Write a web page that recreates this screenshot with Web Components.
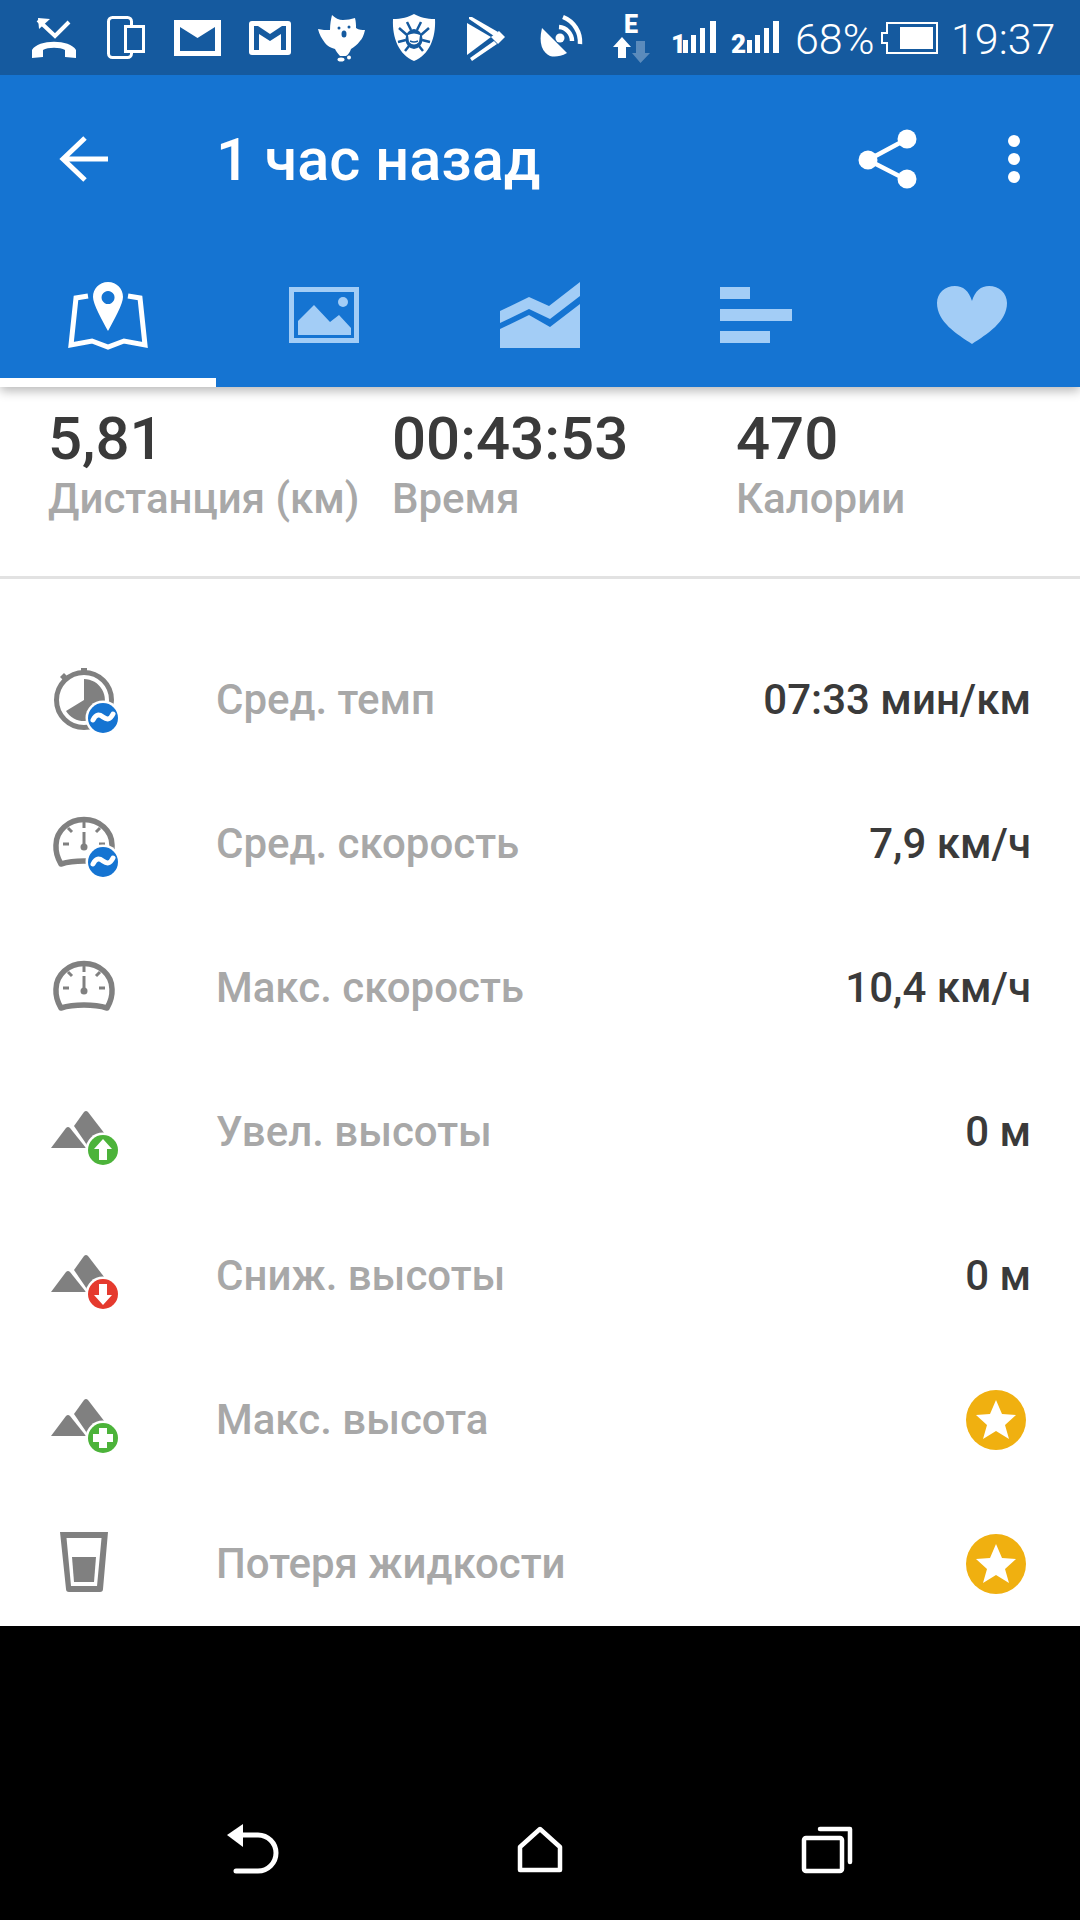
<!DOCTYPE html>
<html lang="ru">
<head>
<meta charset="utf-8">
<title>1 час назад</title>
<style>
  html, body { margin: 0; padding: 0; background: #000; }
  body { width: 1080px; height: 1920px; overflow: hidden; font-family: Roboto, "Noto Sans", sans-serif; }
  app-screen { height: 1920px; }
</style>
</head>
<body>
<app-screen>
  <status-bar slot="status"></status-bar>
  <app-toolbar slot="toolbar" heading="1 час назад"></app-toolbar>
  <stat-strip slot="content"></stat-strip>
  <metric-row slot="content" label="Сред. темп" value="07:33 мин/км" icon="pace"></metric-row>
  <metric-row slot="content" label="Сред. скорость" value="7,9 км/ч" icon="avgspeed"></metric-row>
  <metric-row slot="content" label="Макс. скорость" value="10,4 км/ч" icon="maxspeed"></metric-row>
  <metric-row slot="content" label="Увел. высоты" value="0 м" icon="elevup"></metric-row>
  <metric-row slot="content" label="Сниж. высоты" value="0 м" icon="elevdown"></metric-row>
  <metric-row slot="content" label="Макс. высота" icon="elevmax" premium></metric-row>
  <metric-row slot="content" label="Потеря жидкости" icon="glass" premium></metric-row>
  <nav-bar slot="nav"></nav-bar>
</app-screen>

<script>
const BAR = "#155a9f";
const GREY = "#808080";

// shared bits of the metric icons
const badge = (fill, inner) => `<circle cx="55" cy="54" r="17.5" fill="#fff"/><circle cx="55" cy="54" r="15" fill="${fill}"/>${inner}`;
const wave = `<path d="M45 56c3-6 6-6 10-3s7 3 10-3" fill="none" stroke="#fff" stroke-width="5" stroke-linecap="round"/>`;
const hills = `<path d="M3 52 18 32q2-2 4 0L38 52Z" fill="${GREY}"/><path d="M26 30 36 16q2-2 4 0L60 42 44 52H41Z" fill="${GREY}"/>`;
const gauge = `<path d="M13 56C7 46 8 38 8 37a27.500 25 0 0 1 56 0c0 1 1 9-5 19C46 52 26 52 13 56Z" fill="none" stroke="${GREY}" stroke-width="5.500" stroke-linejoin="round"/>
  <path d="M36 13v7M15 36h6M51 36h6M20 20l4 4M52 20l-4 4" stroke="${GREY}" stroke-width="3"/>
  <path d="M36 24v15" stroke="${GREY}" stroke-width="3"/><circle cx="36" cy="39" r="3.500" fill="${GREY}"/>`;

const ICONS = {
  // status bar, 1 unit = 1 px
  call: [44, 42, `<path d="M6 3 23 19 37 5" fill="none" stroke="#fff" stroke-width="4"/><path d="M6 1 18 2 7 12Z" fill="#fff"/>
    <path d="M0 41V33C6 22 38 22 44 33V41L33 40V33C28 30 16 30 11 33V40Z" fill="#fff"/>`],
  phones: [38, 43, `<rect x="1.500" y="1.500" width="23" height="40" rx="4" fill="none" stroke="#fff" stroke-width="3"/>
    <rect x="18.500" y="10.500" width="18" height="25" fill="${BAR}" stroke="#fff" stroke-width="3"/>`],
  mail: [47, 36, `<path d="M0 0H47V36H0ZM6 7V31H41V7L23.500 18Z" fill="#fff" fill-rule="evenodd"/>`],
  gmail: [42, 34, `<rect width="42" height="34" rx="3" fill="#fff"/><path d="M5 5H9L21 13 33 5H37V29H32V13L21 20 10 13V29H5Z" fill="${BAR}"/>`],
  owl: [47, 48, `<path d="M14 0C17 3 21 5 25 5 29 5 33 4 37 3 38 7 38 10 38 13 41 15 44 15 47 15 46 20 44 24 42 26 39 30 36 32 33 34 32 37 30 40 28 41H22C20 39 18 36 17 34 13 33 9 31 7 28 4 24 1 19 0 14 4 15 8 15 12 15 12 9 13 4 14 0Z" fill="#fff"/>
    <circle cx="21" cy="13" r="1.500" fill="${BAR}"/><circle cx="31" cy="12" r="1.500" fill="${BAR}"/><ellipse cx="26" cy="19" rx="2.500" ry="3.500" fill="${BAR}"/>
    <ellipse cx="23" cy="44.500" rx="3.500" ry="2" fill="#fff"/><circle cx="31" cy="42.500" r="2" fill="#fff"/>`],
  shield: [42, 48, `<path d="M21 0C26 3 34 5 42 5 43 24 36 41 21 47 6 41-1 24 0 5 8 5 16 3 21 0Z" fill="#fff"/>
    <ellipse cx="21" cy="25" rx="8.500" ry="10" fill="${BAR}"/><path d="M15 21Q21 18 27 21L26 28Q21 33 16 28Z" fill="#fff"/><path d="M17 27Q21 29 25 27" stroke="${BAR}" stroke-width="1.500" fill="none"/>
    <path d="M14 8 18 16M28 8 24 16M6 14 14 21M36 14 28 21M5 28 13 26M37 28 29 26M12 37 16 32M30 37 26 32" stroke="${BAR}" stroke-width="2.500"/>`],
  play: [39, 44, `<path d="M0 6 24 20 0 38Z" fill="#fff"/><path d="M2 0 5 0 31 15 27 19 2 2Z" fill="#fff"/><path d="M24 20 32 14 38 20 31 27Z" fill="#fff"/><path d="M3 41 27 24 30 27 5 44Z" fill="#fff"/>`],
  dish: [42, 42, `<path d="M2 12 27 37C20 41 14 41 10 40 3 37-2 28 2 12Z" fill="#fff"/><circle cx="20" cy="22" r="4.500" fill="#fff"/>
    <path d="M19 11A14 14 0 0 1 32 25M23 1A27 27 0 0 1 40 28" fill="none" stroke="#fff" stroke-width="4.500"/>`],
  data: [37, 47, `<text x="18" y="17" font-family="Roboto" font-weight="900" font-size="25" text-anchor="middle" fill="#fff">E</text>
    <path d="M0 31 9 21 18 31H13V42H5V31Z" fill="#fff"/><path d="M23 25H32V37H37L27.500 47 19 37H23Z" fill="#fff" opacity=".3"/>`],
  sig1: [45, 32, `<text x="0" y="32" font-family="Roboto" font-weight="900" font-size="26" fill="#fff">1</text><path d="M12 19h5v13h-5zM20 14h5v18h-5zM29 7h5v25h-5zM39 0h6v32h-6z" fill="#fff"/>`],
  sig2: [47, 32, `<text x="-1" y="32" font-family="Roboto" font-weight="900" font-size="26" fill="#fff">2</text><path d="M15 19h5v13h-5zM23 14h5v18h-5zM32 7h5v25h-5zM41 0h6v32h-6z" fill="#fff"/>`],
  battery: [57, 32, `<path d="M6 1H56V31H6V21H1V11H6Z" fill="none" stroke="#fff" stroke-width="2"/><rect x="19" y="5" width="33" height="22" fill="#fff"/>`],
  // toolbar
  back: [48, 46, `<path d="M48 23H4M25 2 3 23 25 44" fill="none" stroke="#fff" stroke-width="5"/>`],
  share: [58, 60, `<path d="M48 10 9 31 48 51" fill="none" stroke="#fff" stroke-width="4.500"/><circle cx="9" cy="31" r="9.500" fill="#fff"/><circle cx="48" cy="10" r="9.500" fill="#fff"/><circle cx="48" cy="50" r="9.500" fill="#fff"/>`],
  more: [12, 48, `<circle cx="6" cy="6" r="6" fill="#fff"/><circle cx="6" cy="24" r="6" fill="#fff"/><circle cx="6" cy="42" r="6" fill="#fff"/>`],
  // tabs
  map: [80, 66, `<path fill-rule="evenodd" fill="#fff" d="M40 0C49 0 55 7 55 15 55 22 46 38 40 49 34 38 25 22 25 15 25 7 31 0 40 0ZM40 9A6.500 6.500 0 1 0 40.100 9Z"/>
    <path d="M20 14 8 16 3 63 24 59 40 65 56 59 77 63 72 16 60 14" fill="none" stroke="#fff" stroke-width="5"/>`],
  image: [70, 56, `<path fill-rule="evenodd" fill="#a3cdf6" d="M0 0H70V56H0ZM5 5V51H65V5Z"/><path d="M9 48V34L25 18 41 35 50 28 62 41V48Z" fill="#a3cdf6"/><circle cx="54" cy="15" r="5" fill="#a3cdf6"/>`],
  chart: [80, 66, `<path d="M0 29 29 15 49 24 80 0V14L50 37 29 27 0 41Z" fill="#a3cdf6"/><path d="M0 47 29 33 50 45 80 22V66H0Z" fill="#a3cdf6"/>`],
  bars: [72, 56, `<path d="M0 0H30V12H0ZM0 22H72V34H0ZM0 44H50V56H0Z" fill="#a3cdf6"/>`],
  heart: [70, 58, `<path d="M35 58C20 48 0 36 0 17 0 7 8 0 18 0 26 0 32 5 35 15 38 5 44 0 52 0 62 0 70 7 70 17 70 36 50 48 35 58Z" fill="#a3cdf6"/>`],
  // metric rows
  pace: [72, 72, `<circle cx="36" cy="36" r="27.500" fill="none" stroke="${GREY}" stroke-width="5"/><rect x="33" y="4" width="6" height="6" fill="${GREY}"/><path d="M12 13l4-4 4 4-4 4z" fill="${GREY}"/>
    <path d="M36 15A21 21 0 1 1 18 47L36 36Z" fill="${GREY}"/>${badge("#1574d2", wave)}`],
  avgspeed: [72, 72, `${gauge}${badge("#1574d2", wave)}`],
  maxspeed: [72, 72, gauge],
  elevup: [72, 72, `${hills}${badge("#4cb33a", `<path d="M55 43 64 53H59V64H51V53H46Z" fill="#fff"/>`)}`],
  elevdown: [72, 72, `${hills}${badge("#e53a2e", `<path d="M55 65 64 55H59V44H51V55H46Z" fill="#fff"/>`)}`],
  elevmax: [72, 72, `${hills}${badge("#4cb33a", `<path d="M51 44H59V50H65V58H59V64H51V58H45V50H51Z" fill="#fff"/>`)}`],
  glass: [72, 72, `<path d="M12 4H60L55 61Q55 64 52 64H21Q18 64 18 61Z" fill="${GREY}"/><path d="M18.500 10H53.500L49 58H23Z" fill="#fff"/><path d="M24 29H48L46 54H26Z" fill="${GREY}"/>`],
  star: [60, 60, `<circle cx="30" cy="30" r="30" fill="#f0b010"/><path d="M30 10 36 24 50 25 39 35 43 49 30 41 17 49 21 35 10 25 24 24Z" fill="#fff"/>`],
  // nav
  navback: [52, 50, `<path d="M12 11H31A18 18 0 0 1 31 47H9" fill="none" stroke="#fff" stroke-width="5" stroke-linecap="round"/><path d="M0 11 16 0V23Z" fill="#fff"/>`],
  navhome: [44, 46, `<path d="M22 3 42 21V44H2V21Z" fill="none" stroke="#fff" stroke-width="4.500" stroke-linejoin="round"/>`],
  navrecent: [50, 47, `<rect x="2" y="12" width="38" height="33" rx="2" fill="none" stroke="#fff" stroke-width="4.500"/><path d="M18 3H48V36" fill="none" stroke="#fff" stroke-width="4.500" stroke-linecap="round" stroke-linejoin="round"/>`],
};

window.customElements.define(
  "ra-icon",
  class extends HTMLElement {
    connectedCallback() {
      const [w, h, body] = ICONS[this.getAttribute("name")];
      const root = this.attachShadow({ mode: "open" });
      root.innerHTML = `
      <style>
        :host { display: block; flex: none; line-height: 0; }
        svg { display: block; overflow: visible; }
      </style>
      <svg xmlns="http://www.w3.org/2000/svg" width="${w}" height="${h}" viewBox="0 0 ${w} ${h}">${body}</svg>`;
    }
  }
);

window.customElements.define(
  "app-screen",
  class extends HTMLElement {
    constructor() {
      super();
      const root = this.attachShadow({ mode: "open" });
      root.innerHTML = `
      <style>
        :host { display: flex; flex-direction: column; width: 1080px; background: #000; }
        main {
          display: block;
          height: 1239px;
          overflow: hidden;
          background: #fff;
        }
        .top { position: relative; z-index: 1; box-shadow: 0 4px 10px rgba(0,0,0,.28); }
      </style>
      <div class="top"><slot name="status"></slot><slot name="toolbar"></slot></div>
      <main><slot name="content"></slot></main>
      <slot name="nav"></slot>`;
    }
  }
);

window.customElements.define(
  "status-bar",
  class extends HTMLElement {
    constructor() {
      super();
      const root = this.attachShadow({ mode: "open" });
      // name, gap to the previous item, top: the icons are not evenly spaced
      const items = [["call", 32, 17], ["phones", 31, 16], ["mail", 29, 20], ["gmail", 28, 21], ["owl", 27, 15], ["shield", 28, 14], ["play", 32, 17], ["dish", 34, 16], ["data", 31, 16], ["sig1", 21, 21], ["sig2", 16, 21]];
      root.innerHTML = `
      <style>
        :host {
          display: flex;
          align-items: flex-start;
          height: 75px;
          background: ${BAR};
          color: #fff;
          font: 300 43px/78px Roboto, sans-serif;
        }
        .pct { margin-left: 16px; width: 76px; white-space: nowrap; }
        .time { margin-left: 13px; white-space: nowrap; }
      </style>
      ${items.map(([n, gap, top]) => `<ra-icon name="${n}" style="margin-left:${gap}px;margin-top:${top}px"></ra-icon>`).join("")}
      <span class="pct">68%</span>
      <ra-icon name="battery" style="margin-left:10px;margin-top:22px"></ra-icon>
      <span class="time">19:37</span>`;
    }
  }
);

window.customElements.define(
  "app-toolbar",
  class extends HTMLElement {
    connectedCallback() {
      const root = this.attachShadow({ mode: "open" });
      const tabs = ["map", "image", "chart", "bars", "heart"];
      root.innerHTML = `
      <style>
        :host { display: block; background: #1574d2; color: #fff; }
        .row {
          display: flex;
          align-items: center;
          height: 168px;
          padding-left: 60px;
          padding-right: 60px;
        }
        h1 {
          flex: 1;
          margin: 3px 0 0 108px;
          font: 500 59.500px/1 Roboto, sans-serif;
          white-space: nowrap;
        }
        .share { margin-right: 91px; }
        .tabs { display: grid; grid-template-columns: repeat(5, 216px); height: 144px; }
        .tab { position: relative; display: flex; align-items: center; justify-content: center; }
        .tab.on::after {
          content: "";
          position: absolute;
          left: 0;
          right: 0;
          bottom: 0;
          height: 9px;
          background: #fff;
        }
      </style>
      <div class="row">
        <ra-icon name="back"></ra-icon>
        <h1>${this.getAttribute("heading")}</h1>
        <ra-icon class="share" name="share"></ra-icon>
        <ra-icon name="more"></ra-icon>
      </div>
      <div class="tabs">
        ${tabs.map((t, i) => `<div class="tab ${i === 0 ? "on" : ""}"><ra-icon name="${t}"></ra-icon></div>`).join("")}
      </div>`;
    }
  }
);

window.customElements.define(
  "stat-strip",
  class extends HTMLElement {
    constructor() {
      super();
      const root = this.attachShadow({ mode: "open" });
      const stats = [["5,81", "Дистанция (км)"], ["00:43:53", "Время"], ["470", "Калории"]];
      root.innerHTML = `
      <style>
        :host {
          display: grid;
          grid-template-columns: repeat(3, 344px);
          height: 189px;
          padding-left: 48px;
          margin-bottom: 49px;
          border-bottom: 3px solid #e2e2e2;
        }
        .val { margin-top: 17px; font: 500 60px/70px Roboto, sans-serif; color: #3a3a3a; white-space: nowrap; }
        .lab { margin-top: 1px; font: 500 42px/48px Roboto, sans-serif; color: #a8a8a8; white-space: nowrap; }
      </style>
      ${stats.map(([v, l]) => `<div><div class="val">${v}</div><div class="lab">${l}</div></div>`).join("")}`;
    }
  }
);

window.customElements.define(
  "metric-row",
  class extends HTMLElement {
    connectedCallback() {
      const root = this.attachShadow({ mode: "open" });
      const right = this.hasAttribute("premium")
        ? `<ra-icon class="coin" name="star"></ra-icon>`
        : `<span class="value">${this.getAttribute("value")}</span>`;
      root.innerHTML = `
      <style>
        :host {
          display: flex;
          align-items: center;
          height: 144px;
          padding: 0 49px 0 48px;
        }
        .label { flex: 1; margin-left: 96px; font: 500 42px/1 Roboto, sans-serif; color: #a8a8a8; white-space: nowrap; }
        .value { font: 500 42px/1 Roboto, sans-serif; color: #3a3a3a; white-space: nowrap; }
        .coin { margin-right: 5px; }
      </style>
      <ra-icon name="${this.getAttribute("icon")}"></ra-icon>
      <span class="label">${this.getAttribute("label")}</span>
      ${right}`;
    }
  }
);

window.customElements.define(
  "nav-bar",
  class extends HTMLElement {
    constructor() {
      super();
      const root = this.attachShadow({ mode: "open" });
      root.innerHTML = `
      <style>
        :host {
          display: grid;
          grid-template-columns: repeat(3, 52px);
          justify-content: space-between;
          align-items: center;
          height: 50px;
          padding: 198px 227px 46px;
        }
        ra-icon { justify-self: center; }
      </style>
      <ra-icon name="navback"></ra-icon>
      <ra-icon name="navhome"></ra-icon>
      <ra-icon name="navrecent"></ra-icon>`;
    }
  }
);
</script>
</body>
</html>
